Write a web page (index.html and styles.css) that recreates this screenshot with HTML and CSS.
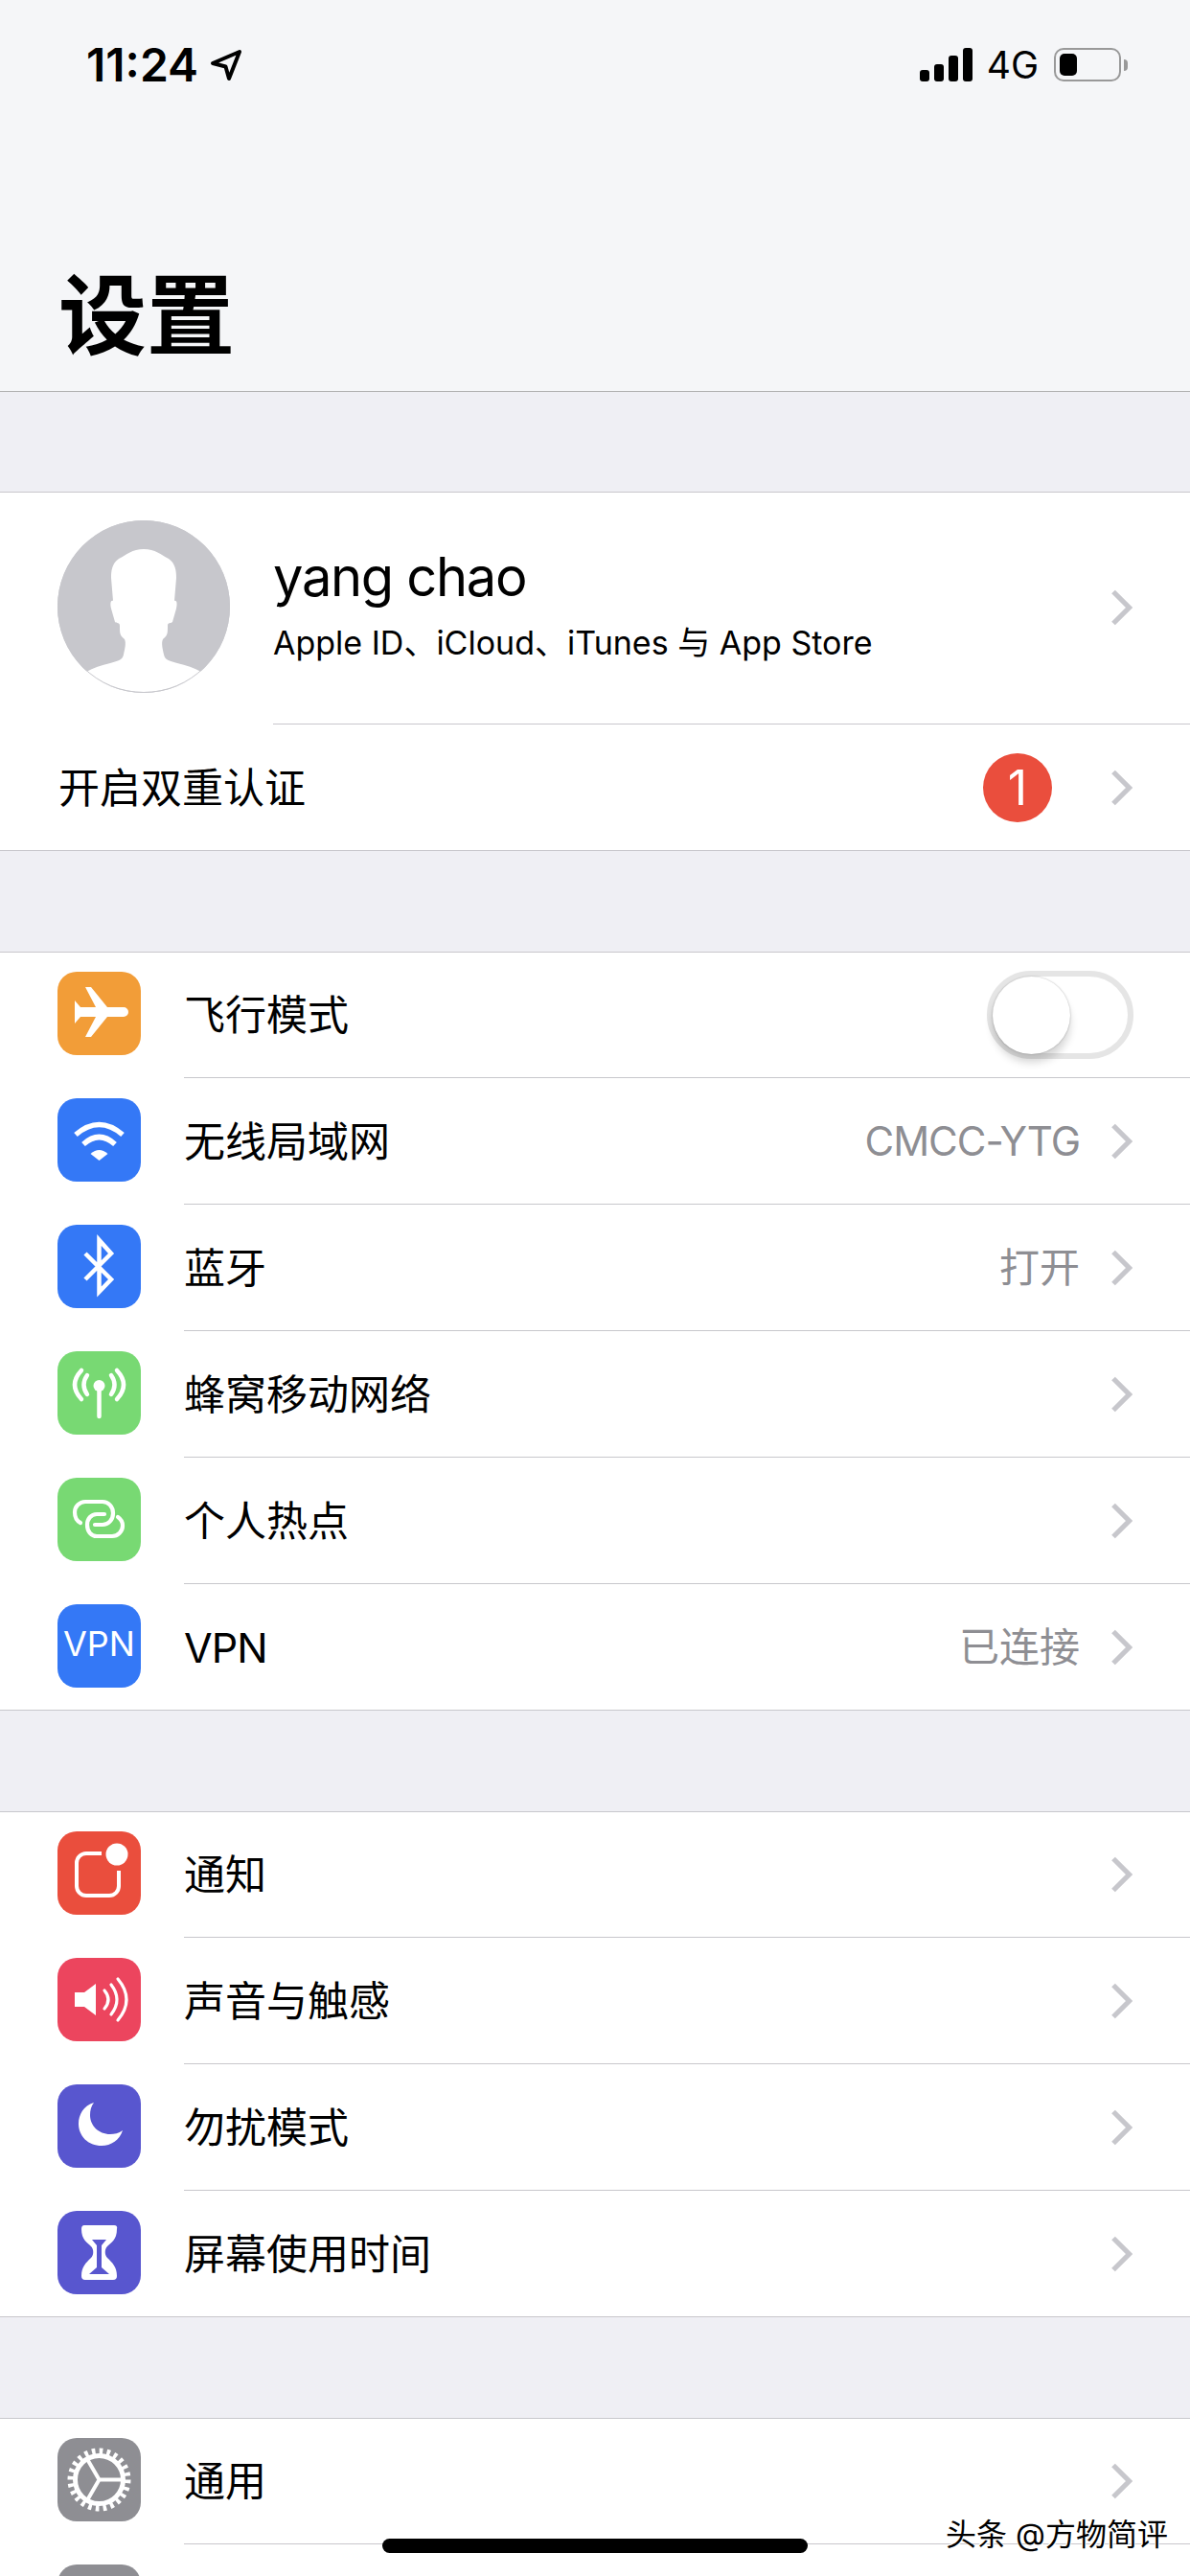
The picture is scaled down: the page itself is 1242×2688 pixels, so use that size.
FILE: index.html
```html
<!DOCTYPE html>
<html lang="zh-CN">

<head>
    <meta charset="UTF-8">
    <title>设置</title>
    <link rel="stylesheet" href="styles.css">
</head>

<body>

    <svg class="defs" width="0" height="0">
        <symbol id="chevron" viewBox="0 0 23 38">
            <path d="M3 2.500 L19.500 19 L3 35.500" fill="none" stroke="#c7c7cc" stroke-width="5.200"></path>
        </symbol>
    </svg>

    <header class="nav">
        <div class="status">
            <div class="status-left">
                <span class="time">11:24</span>
                <svg class="arrow" viewBox="0 0 34 34">
                    <path d="M3 15 L31 3 L20 31 L16.500 18.500 Z" fill="none" stroke="#000" stroke-width="4" stroke-linejoin="round"></path>
                </svg>
            </div>
            <div class="status-right">
                <div class="signal">
                    <i class="s1"></i><i class="s2"></i><i class="s3"></i><i class="s4"></i>
                </div>
                <span class="net">4G</span>
                <div class="battery"><i class="level"></i></div>
                <i class="nub"></i>
            </div>
        </div>
        <h1 class="title">设置</h1>
    </header>

    <section class="group">
        <div class="profile">
            <svg class="avatar" viewBox="0 0 180 180">
                <circle cx="90" cy="90" r="90" fill="#c7c7cc"></circle>
                <path d="M90 30 C102 30 108 36 116 40 C123 45 124 52 124 60 L122 84 C125 83 125 88 124 92 L120 106 C118 108 115 106 115 110 C115 118 115 120 110 124 C108 128 110 135 111 140 C112 146 118 147 125 149 C134 151 143 154 150 158 C135 171 113 179 90 179 C67 179 45 171 30 158 C37 154 46 151 55 149 C62 147 68 146 69 140 C70 135 72 128 70 124 C65 120 65 118 65 110 C65 106 62 108 60 106 L56 92 C55 88 55 83 58 84 L56 60 C56 52 57 45 64 40 C72 36 78 30 90 30 Z" fill="#fff"></path>
                <circle cx="90" cy="90" r="89.500" fill="none" stroke="#c7c7cc" stroke-width="1"></circle>
            </svg>
            <div class="profile-body">
                <div class="name">yang chao</div>
                <div class="account">Apple ID、iCloud、iTunes 与 App Store</div>
                <svg class="chevron profile-chevron"><use href="#chevron"></use></svg>
            </div>
        </div>
        <div class="twofactor">
            <span class="label">开启双重认证</span>
            <span class="badge">1</span>
            <svg class="chevron"><use href="#chevron"></use></svg>
        </div>
    </section>

    <section class="group">
        <div class="row">
            <div class="icon orange">
                <svg viewBox="0 0 87 87">
                    <path d="M29 16 H35 L52 37 H69 A5 5 0 0 1 69 47 H52 L35 68 H29 L40 47 H24 L18 54 V30 L24 37 H40 Z" fill="#fff"></path>
                </svg>
            </div>
            <div class="row-body">
                <span class="label">飞行模式</span>
                <div class="toggle"><i class="knob"></i></div>
            </div>
        </div>
        <div class="row">
            <div class="icon blue">
                <svg viewBox="0 0 87 87">
                    <path d="M19 38 Q43.500 17 68 38 M27 48 Q43.500 33 60 48" fill="none" stroke="#fff" stroke-width="5.500"></path>
                    <path d="M34.500 58 Q43.500 50 52.500 58 L43.500 65 Z" fill="#fff"></path>
                </svg>
            </div>
            <div class="row-body">
                <span class="label">无线局域网</span>
                <span class="value latin">CMCC-YTG</span>
                <svg class="chevron"><use href="#chevron"></use></svg>
            </div>
        </div>
        <div class="row">
            <div class="icon blue">
                <svg viewBox="0 0 87 87">
                    <path d="M29 30 L56 57 L43.500 70 V16 L56 30 L29 57" fill="none" stroke="#fff" stroke-width="4.500"></path>
                </svg>
            </div>
            <div class="row-body">
                <span class="label">蓝牙</span>
                <span class="value">打开</span>
                <svg class="chevron"><use href="#chevron"></use></svg>
            </div>
        </div>
        <div class="row">
            <div class="icon green">
                <svg viewBox="0 0 87 87">
                    <circle cx="43.500" cy="36" r="6" fill="#fff"></circle>
                    <path d="M43.500 38 V68 M31 25 Q24 35 31 45 M56 25 Q63 35 56 45 M25 20 Q11 35 25 50 M62 20 Q76 35 62 50" fill="none" stroke="#fff" stroke-width="4.500" stroke-linecap="round"></path>
                </svg>
            </div>
            <div class="row-body">
                <span class="label">蜂窝移动网络</span>
                <svg class="chevron"><use href="#chevron"></use></svg>
            </div>
        </div>
        <div class="row">
            <div class="icon green">
                <svg viewBox="0 0 87 87">
                    <path d="M24 47 C20 45 18 41 18 36 C18 30 23 25 29 25 H47 C53 25 58 30 58 37 C58 44 53 49 47 49 H39 M49 38 H41 C35 38 31 43 31 49 C31 56 35 61 41 61 H57 C63 61 68 56 68 50 C68 46 66 43 63 41" fill="none" stroke="#fff" stroke-width="4.200" stroke-linecap="round"></path>
                </svg>
            </div>
            <div class="row-body">
                <span class="label">个人热点</span>
                <svg class="chevron"><use href="#chevron"></use></svg>
            </div>
        </div>
        <div class="row">
            <div class="icon blue vpn">VPN</div>
            <div class="row-body">
                <span class="label latin">VPN</span>
                <span class="value">已连接</span>
                <svg class="chevron"><use href="#chevron"></use></svg>
            </div>
        </div>
    </section>

    <section class="group">
        <div class="row">
            <div class="icon red">
                <svg viewBox="0 0 87 87">
                    <path d="M46 23 H30 A10 10 0 0 0 20 33 V57 A10 10 0 0 0 30 67 H54 A10 10 0 0 0 64 57 V41" fill="none" stroke="#fff" stroke-width="4"></path>
                    <circle cx="62" cy="24" r="11.500" fill="#fff"></circle>
                </svg>
            </div>
            <div class="row-body">
                <span class="label">通知</span>
                <svg class="chevron"><use href="#chevron"></use></svg>
            </div>
        </div>
        <div class="row">
            <div class="icon pink">
                <svg viewBox="0 0 87 87">
                    <path d="M18 36 H28 L40 27 V60 L28 51 H18 Z" fill="#fff"></path>
                    <path d="M49 34 Q57 43.500 49 53 M56 28 Q68 43.500 56 59 M63 22 Q81 43.500 63 65" fill="none" stroke="#fff" stroke-width="3.200" stroke-linecap="round"></path>
                </svg>
            </div>
            <div class="row-body">
                <span class="label">声音与触感</span>
                <svg class="chevron"><use href="#chevron"></use></svg>
            </div>
        </div>
        <div class="row">
            <div class="icon purple">
                <svg viewBox="0 0 87 87">
                    <path d="M38 19 C27 22 22 32 22 41 C22 54 32 64 46 64 C56 64 65 58 68 48 C64 51 59 52 55 52 C43 52 34 43 34 32 C34 27 35 23 38 19 Z" fill="#fff"></path>
                </svg>
            </div>
            <div class="row-body">
                <span class="label">勿扰模式</span>
                <svg class="chevron"><use href="#chevron"></use></svg>
            </div>
        </div>
        <div class="row">
            <div class="icon purple">
                <svg viewBox="0 0 87 87">
                    <path d="M28 15 H59 Q63 15 62 19 C62 30 56 33 52 37 C49 40 49 46 52 49 C57 54 62 58 62 68 Q62 72 58 72 H29 Q25 72 25 68 C25 58 30 54 35 49 C38 46 38 40 35 37 C31 33 25 30 25 19 Q25 15 28 15 Z" fill="#fff"></path>
                    <path d="M36 30 H51 L46 36 V59 L54 66 H33 L41 59 V36 Z" fill="#5856cf"></path>
                </svg>
            </div>
            <div class="row-body">
                <span class="label">屏幕使用时间</span>
                <svg class="chevron"><use href="#chevron"></use></svg>
            </div>
        </div>
    </section>

    <section class="group">
        <div class="row">
            <div class="icon gray">
                <svg viewBox="0 0 87 87">
                    <circle cx="43.500" cy="43.500" r="25" fill="none" stroke="#fff" stroke-width="5"></circle>
                    <circle cx="43.500" cy="43.500" r="29.500" fill="none" stroke="#fff" stroke-width="7" stroke-dasharray="3.600 4.120"></circle>
                    <path d="M43.500 43.500 H68 M43.500 43.500 L31 22 M43.500 43.500 L31 65" fill="none" stroke="#fff" stroke-width="4"></path>
                </svg>
            </div>
            <div class="row-body">
                <span class="label">通用</span>
                <svg class="chevron"><use href="#chevron"></use></svg>
            </div>
        </div>
        <div class="row">
            <div class="icon gray"></div>
            <div class="row-body"></div>
        </div>
    </section>

    <div class="home-bar"></div>
    <div class="watermark">头条 @方物简评</div>

</body>

</html>
```

FILE: styles.css
```css
html,
body {
    margin: 0;
    height: 2688px;
    overflow: hidden;
}

body {
    position: relative;
    background-color: #efeff4;
    color: #000;
    font-family: Inter, "Noto Sans CJK SC", sans-serif;
}

.defs {
    position: absolute;
}

/* top bar */

.nav {
    height: 409px;
    box-sizing: border-box;
    padding-top: 50px;
    background-color: #f5f6f8;
    border-bottom: 1px solid #b2b2b2;
}

.status {
    display: flex;
    justify-content: space-between;
    height: 35px;
    padding: 0 65px 0 90px;
}

.status-left,
.status-right {
    display: flex;
    align-items: center;
}

.time {
    font-size: 48px;
    font-weight: 600;
    line-height: 35px;
}

.arrow {
    width: 34px;
    height: 34px;
    margin-left: 12px;
}

.signal {
    display: flex;
    align-items: flex-end;
    gap: 5px;
    height: 35px;
}

.signal i {
    width: 10px;
    border-radius: 3px;
    background-color: #000;
}

.s1 { height: 12px; }
.s2 { height: 18px; }
.s3 { height: 27px; }
.s4 { height: 35px; }

.net {
    margin-left: 15px;
    font-size: 39px;
    line-height: 35px;
}

.battery {
    width: 70px;
    height: 35px;
    box-sizing: border-box;
    margin-left: 16px;
    padding: 4px;
    border: 2px solid #999;
    border-radius: 10px;
}

.level {
    display: block;
    width: 18px;
    height: 23px;
    border-radius: 5px;
    background-color: #000;
}

.nub {
    width: 4px;
    height: 12px;
    margin-left: 3px;
    border-radius: 0 4px 4px 0;
    background-color: #999;
}

.title {
    margin: 0;
    padding: 180px 0 0 61px;
    font-size: 92px;
    font-weight: 700;
    line-height: 130px;
}

/* list groups */

.group {
    margin-top: 105px;
    background-color: #fff;
    border-top: 1px solid #c8c7cc;
    border-bottom: 1px solid #c8c7cc;
}

.nav + .group {
    margin-top: 104px;
}

.profile {
    display: flex;
    height: 242px;
}

.avatar {
    flex: none;
    width: 180px;
    height: 180px;
    margin: 29px 45px 0 60px;
}

.profile-body {
    position: relative;
    flex: 1;
    box-sizing: border-box;
    padding-top: 53px;
    border-bottom: 1px solid #c8c7cc;
}

.name {
    font-size: 56px;
    line-height: 70px;
    letter-spacing: -1.300px;
}

.account {
    margin-top: 12px;
    font-size: 34px;
    line-height: 44px;
}

.chevron {
    flex: none;
    width: 23px;
    height: 38px;
}

.profile-chevron {
    position: absolute;
    top: 101px;
    right: 60px;
}

.twofactor {
    display: flex;
    align-items: center;
    height: 131px;
    padding: 0 60px 0 61px;
}

.label {
    flex: 1;
    font-size: 43px;
    line-height: 60px;
}

.latin {
    letter-spacing: -1px;
}

.badge {
    width: 72px;
    height: 72px;
    margin-right: 61px;
    border-radius: 50%;
    background-color: #ea4e3d;
    color: #fff;
    font-size: 50px;
    line-height: 72px;
    text-align: center;
}

.row {
    display: flex;
    height: 132px;
}

.row:last-child {
    height: 130px;
}

.icon {
    flex: none;
    width: 87px;
    height: 87px;
    margin: 20px 45px 0 60px;
    border-radius: 20px;
}

.icon svg {
    display: block;
    width: 87px;
    height: 87px;
}

.orange { background-color: #f29d38; }
.blue { background-color: #3478f6; }
.green { background-color: #78d973; }
.red { background-color: #ea4e3d; }
.pink { background-color: #ec455e; }
.purple { background-color: #5856cf; }
.gray { background-color: #8e8e93; }

.vpn {
    color: #fff;
    font-size: 36px;
    line-height: 82px;
    text-align: center;
}

.row-body {
    display: flex;
    flex: 1;
    align-items: center;
    height: 131px;
    box-sizing: border-box;
    padding-right: 60px;
    border-bottom: 1px solid #c8c7cc;
}

.row:last-child .row-body {
    height: 130px;
    border-bottom: none;
}

.value {
    margin-right: 32px;
    color: #8e8e93;
    font-size: 42px;
    line-height: 60px;
}

.toggle {
    position: relative;
    width: 153px;
    height: 92px;
    box-sizing: border-box;
    margin-right: -1px;
    border: 6px solid #e5e5e5;
    border-radius: 46px;
    background-color: #fff;
}

.knob {
    display: block;
    width: 81px;
    height: 81px;
    border-radius: 50%;
    background-color: #fff;
    box-shadow: 0 9px 9px rgba(0, 0, 0, .16), 0 0 2px rgba(0, 0, 0, .3);
}

/* overlays */

.home-bar {
    position: absolute;
    top: 2649px;
    left: 399px;
    width: 444px;
    height: 15px;
    border-radius: 8px;
    background-color: #000;
}

.watermark {
    position: absolute;
    top: 2624px;
    left: 987px;
    font-size: 32px;
    line-height: 42px;
    white-space: nowrap;
    text-shadow: 1px 1px 0 #fff, -1px -1px 0 #fff;
}
```
